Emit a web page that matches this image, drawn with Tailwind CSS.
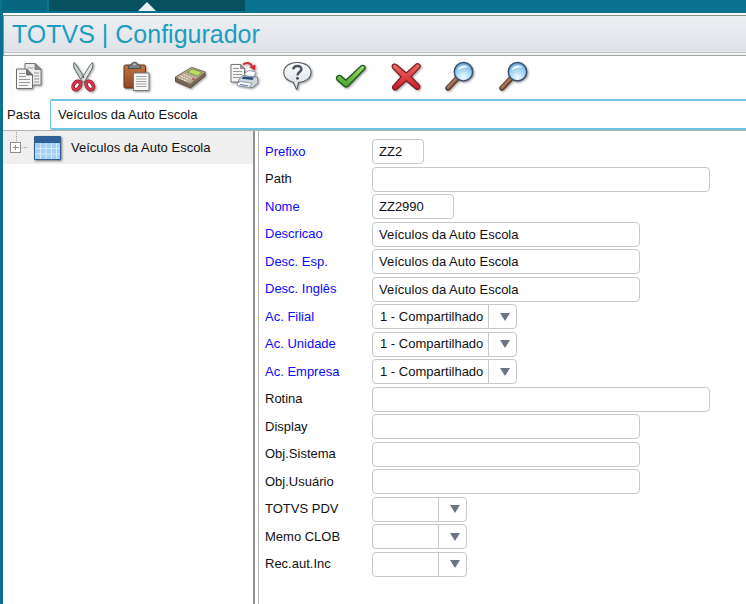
<!DOCTYPE html>
<html lang="pt-BR">
<head>
<meta charset="utf-8">
<meta name="viewport" content="width=device-width, initial-scale=1">
<title>TOTVS | Configurador</title>
<script src="https://cdn.jsdelivr.net/npm/@tailwindcss/browser@4"></script>
</head>
<body class="min-h-screen flex flex-col overflow-x-hidden bg-[#08728f] font-['Liberation_Sans',Arial,sans-serif] text-[13px] leading-4 text-[#111]">

<!-- Top strip with the collapse tab -->
<nav class="h-[13px] shrink-0 flex items-start pl-[2px]">
  <div class="w-[46px] h-[10px] bg-[#07657d] border-r border-[#2a6c7c]"></div>
  <button type="button" aria-label="Recolher menu" class="w-[196px] h-[11px] ml-px bg-[#07505f] flex justify-center items-end">
    <svg class="w-[18px] h-[9px]" viewBox="0 0 18 9"><path d="M9 0 18 9H0z" fill="#e8f0f3"/></svg>
  </button>
</nav>

<div class="grow flex flex-col ml-[3px] bg-white">
  <header class="mt-[2px] border-t border-l border-b border-t-[#8e8e8e] border-l-[#8e8e8e] border-b-[#a2a2a2] bg-[#f4f4f4] pb-[2px]">
    <div class="h-[37px] border-b border-[#bfc3c6] bg-linear-to-b from-[#edf0f3] to-[#dfe3e8] flex items-center pl-2">
      <h1 class="text-[25px] leading-[30px] text-[#1b9dc4]">TOTVS | Configurador</h1>
    </div>
  </header>

  <div class="flex gap-[22px] pl-[10px] pt-[5px] pb-[6px]" role="toolbar" aria-label="Ferramentas">
    <button type="button" aria-label="Copiar" class="size-8">
      <svg class="size-8 drop-shadow-[1px_1px_1px_#0006]" viewBox="0 0 32 32">
        <path d="M12 2.500h10l6 6V24H12z" fill="#ececec" stroke="#777"/><path d="M22 2.500v6h6z" fill="#8c8c8c" stroke="#666" stroke-width=".7"/>
        <path d="M14.500 7h6M21 12h5M21 15h5M21 18h5M21 21h5" stroke="#999"/>
        <path d="M3.500 8h10l6 6v13.500h-16z" fill="#f5f5f3" stroke="#6e6e6e"/><path d="M13.500 8v6h6z" fill="#777" stroke="#555" stroke-width=".7"/>
        <path d="M6 12.500h6M6 15.500h7M6 18.500h11M6 21.500h11M6 24.500h9" stroke="#999"/>
      </svg>
    </button>
    <button type="button" aria-label="Recortar" class="size-8">
      <svg class="size-8 drop-shadow-[1px_1px_1px_#0006]" viewBox="0 0 32 32">
        <path d="M7 1.500c-1 3 0 6 1.500 8l7 12 3-3L10 5z" fill="#c7cdce" stroke="#646b6e"/>
        <path d="M25.500 1.500c1 3 0 6-1.500 8l-7 12-3-3L22.500 5z" fill="#e2e5e5" stroke="#646b6e"/>
        <circle cx="16.300" cy="16" r="1" fill="#555"/>
        <ellipse cx="9.800" cy="24.500" rx="3.200" ry="4.600" transform="rotate(35 9.800 24.500)" fill="#fff" stroke="#8f1c2b" stroke-width="3.600"/>
        <ellipse cx="22.800" cy="24.500" rx="3.200" ry="4.600" transform="rotate(-35 22.800 24.500)" fill="#fff" stroke="#8f1c2b" stroke-width="3.600"/>
        <ellipse cx="9.800" cy="24.500" rx="3.200" ry="4.600" transform="rotate(35 9.800 24.500)" fill="none" stroke="#d8384c" stroke-width="2.200"/>
        <ellipse cx="22.800" cy="24.500" rx="3.200" ry="4.600" transform="rotate(-35 22.800 24.500)" fill="none" stroke="#d8384c" stroke-width="2.200"/>
      </svg>
    </button>
    <button type="button" aria-label="Colar" class="size-8">
      <svg class="size-8 drop-shadow-[1px_1px_1px_#0006]" viewBox="0 0 32 32">
        <defs><linearGradient id="board" x1="0" y1="0" x2="0" y2="1"><stop offset="0" stop-color="#c4713c"/><stop offset="1" stop-color="#8a4824"/></linearGradient></defs>
        <rect x="3" y="4" width="21.500" height="23" rx="1.500" fill="url(#board)" stroke="#67371d"/>
        <path d="M7.500 7.500V5l3-1.500C10.500.5 16.500.5 16.500 3.500l3 1.500v2.500z" fill="#7c8183" stroke="#494d4f"/><circle cx="13.500" cy="3.500" r="1" fill="#ddd"/>
        <path d="M12.500 12h15.500v17.500H12.500z" fill="#f6f6f4" stroke="#777"/>
        <path d="M15 15.500h10.500M15 18h10.500M15 20.500h10.500M15 23h10.500M15 25.500h10.500" stroke="#a2a2a2"/>
      </svg>
    </button>
    <button type="button" aria-label="Calculadora" class="size-8">
      <svg class="size-8 drop-shadow-[1px_1px_1px_#0006]" viewBox="0 0 32 32">
        <path d="M.5 16 16.500 6.500 30 11v4L15.500 27 .5 20.500z" fill="#766655" stroke="#5d5145"/>
        <path d="M.8 16 16.500 6.500 30 11 15.300 22.800z" fill="#b9aa96" stroke="#8d7e6c" stroke-width=".7"/>
        <path d="m17 8 10 3.300-4.800 3.600-9.800-3.600z" fill="#b9df5d" stroke="#6f8e38" stroke-width=".8"/>
        <path d="m8.500 13.500 8.500 3.600M6 15.200l8.500 3.600M3.800 17l8.500 3.400" stroke="#efe6d8" stroke-width="1.200" stroke-dasharray="1.800 1"/>
        <path d="m17.500 17.800 1.800.8" stroke="#c03b25" stroke-width="1.600"/>
      </svg>
    </button>
    <button type="button" aria-label="Imprimir" class="size-8">
      <svg class="size-8 drop-shadow-[1px_1px_1px_#0006]" viewBox="0 0 32 32">
        <path d="M2 3.500h9.500l4 4V21H2z" fill="#f4f4f2" stroke="#777"/><path d="M11.500 3.500v4h4z" fill="#999" stroke="#666" stroke-width=".6"/>
        <path d="M4 7.500h6M4 10.500h9M4 13.500h9M4 16.500h7" stroke="#999"/>
        <path d="M14 3.500c3-2.500 7-2 9 1.300" fill="none" stroke="#d92a2f" stroke-width="2"/><path d="m20 6 6.500-2.500-.5 6z" fill="#d92a2f"/>
        <path d="m16 12 4-2.500 7 1.500-2.500 5.500-9-.5z" fill="#fafcff" stroke="#8592a5" stroke-width=".8"/>
        <path d="m9.500 19 4-4.500 15 1.500.5 6-5.500 4.500-13-2z" fill="#cfd6e0" stroke="#66758b" stroke-width=".8"/>
        <path d="m14.500 15.500 10.500 1-1.500 2.500-11-1.300z" fill="#2b4a7c"/>
        <path d="m8 22 4-1.500 11 1.800-2.500 4.200-12-2z" fill="#fff" stroke="#7b879a" stroke-width=".8"/><path d="m11 23.500 8.500 1.300" stroke="#577cb8"/>
      </svg>
    </button>
    <button type="button" aria-label="Ajuda" class="size-8">
      <svg class="size-8 drop-shadow-[1px_1px_1px_#0006]" viewBox="0 0 32 32">
        <defs><linearGradient id="bubble" x1="0" y1="0" x2="0" y2="1"><stop offset="0" stop-color="#fff"/><stop offset="1" stop-color="#d7dce1"/></linearGradient></defs>
        <path d="M14.200 1.500C6.500 1.500.800 5.500.800 11.500c0 5 4.200 8.500 9.700 9.700 1 2.500 1.500 5 3.500 7.300.800-2.500.6-5 1.600-7 7.200-.4 12.400-4.500 12.400-10C28 5.500 22 1.500 14.200 1.500z" fill="url(#bubble)" stroke="#59616a" stroke-width="1.100"/>
        <path d="M10.300 8.300c.4-4.700 8.600-4.300 8.100.1-.3 2.600-3.900 2.900-3.900 6" fill="none" stroke="#4b5661" stroke-width="2.500"/><circle cx="14.500" cy="17.300" r="1.500" fill="#4b5661"/>
      </svg>
    </button>
    <button type="button" aria-label="Confirmar" class="size-8">
      <svg class="size-8 overflow-visible drop-shadow-[1px_1px_1px_#0006]" viewBox="0 0 32 32">
        <defs><linearGradient id="check" x1="0" y1="0" x2="0" y2="1"><stop offset="0" stop-color="#a2dc70"/><stop offset="1" stop-color="#42a52c"/></linearGradient></defs>
        <path d="M-.5 17c0-2 3-3.500 4.500-2l4.800 4.200L24 5c2-1.600 4.800.2 4 2.600L11.500 24.800c-1.500 1.600-3.500 1.500-4.800 0L.2 18.900c-.5-.5-.7-1.200-.7-1.900z" fill="url(#check)" stroke="#245a1e" stroke-width="1.400"/>
      </svg>
    </button>
    <button type="button" aria-label="Cancelar" class="size-8">
      <svg class="size-8 drop-shadow-[1px_1px_1px_#0006]" viewBox="0 0 32 32">
        <defs><linearGradient id="cross" x1="0" y1="0" x2="0" y2="1"><stop offset="0" stop-color="#ef6a66"/><stop offset="1" stop-color="#c81c26"/></linearGradient></defs>
        <path d="M1.200 5c.3-2 2.700-2.600 4.300-1.300l9.800 8.200 9.700-8.600c1.700-1.400 4.300-.2 4.200 2 0 .6-.3 1.200-.8 1.600l-8.300 8.800 8.200 8.500c1.500 2-.2 4.600-2.800 4.200l-10.300-8.600L5.500 28.500c-2.200 1.400-4.800-.9-3.800-3.200l8.400-9.500-8.300-8.600C1.300 6.500 1 5.700 1.200 5z" fill="url(#cross)" stroke="#7d1820" stroke-width="1.200"/>
      </svg>
    </button>
    <button type="button" aria-label="Pesquisar" class="size-8">
      <svg class="size-8 drop-shadow-[1px_1px_1px_#0006]" viewBox="0 0 32 32">
        <defs><radialGradient id="lens" cx=".5" cy=".8" r=".8"><stop offset="0" stop-color="#f2fbff"/><stop offset=".5" stop-color="#a6d7f5"/><stop offset="1" stop-color="#5fa6dc"/></radialGradient></defs>
        <path d="m12 17.500-9 9.500" stroke="#573a2a" stroke-width="5.400" stroke-linecap="round"/><path d="m11.500 17.500-8.500 9" stroke="#a37455" stroke-width="3" stroke-linecap="round"/>
        <circle cx="18.500" cy="10.700" r="9.200" fill="url(#lens)" stroke="#3d4f70" stroke-width="1.500"/><path d="M12.500 9.500c1-5 7.500-6.500 11-3-4-.5-7 .5-11 3z" fill="#fff" opacity=".85"/>
      </svg>
    </button>
    <button type="button" aria-label="Pesquisar próximo" class="size-8">
      <svg class="size-8 drop-shadow-[1px_1px_1px_#0006]" viewBox="0 0 32 32">
        <path d="m12 17.500-9 9.500" stroke="#573a2a" stroke-width="5.400" stroke-linecap="round"/><path d="m11.500 17.500-8.500 9" stroke="#a37455" stroke-width="3" stroke-linecap="round"/>
        <circle cx="18.500" cy="10.700" r="9.200" fill="url(#lens)" stroke="#3d4f70" stroke-width="1.500"/><path d="M12.500 9.500c1-5 7.500-6.500 11-3-4-.5-7 .5-11 3z" fill="#fff" opacity=".85"/>
      </svg>
    </button>
  </div>

  <div class="flex items-center pl-1">
    <label for="pasta" class="w-[43px] shrink-0">Pasta</label>
    <input id="pasta" type="text" value="Veículos da Auto Escola" class="grow min-w-0 h-[31px] px-[7px] rounded-l-[2px] border-t-2 border-l border-b-2 border-[#6cc6dd] bg-white outline-none">
  </div>

  <div class="grow flex border-t border-[#b4b4b4]">
    <aside class="w-[252px] shrink-0 border-r-2 border-[#929292]">
      <ul>
        <li class="h-[33px] flex items-center bg-[#efefef] pl-[7px]">
          <button type="button" aria-label="Expandir" class="h-[33px] w-[18px] mr-[6px]">
            <svg class="w-[18px] h-[33px]" viewBox="0 0 18 33" fill="none" shape-rendering="crispEdges">
              <path d="M6.500 1v10M12 16.500h6" stroke="#999" stroke-dasharray="1 1"/><rect x=".5" y="11.500" width="10" height="10" fill="#fff" stroke="#8c8c8c"/><path d="M3 16.500h6M5.500 14v5" stroke="#8c8c8c"/>
            </svg>
          </button>
          <svg class="w-[27px] h-6 shrink-0 drop-shadow-[1px_1px_1px_#0008]" viewBox="0 0 27 24">
            <path d="M.5.5h26v23H.5z" fill="#a5d0f1" stroke="#315f91"/><path d="M1 1h25v6H1z" fill="#315f9c"/>
            <path d="M1 12.500h25M1 18h25M6.500 7v16M12 7v16M17.500 7v16M22.500 7v16" stroke="#dceefa" stroke-width=".8"/>
          </svg>
          <span class="ml-[10px]">Veículos da Auto Escola</span>
        </li>
      </ul>
    </aside>

    <form class="grow min-w-0 ml-[3px] border-l border-[#b5b5b5] pl-[6px] pt-[7px] pb-6">
      <div class="h-[27px] flex items-center"><label for="prefixo" class="w-[107px] shrink-0 text-[#0a0aff]">Prefixo</label><input id="prefixo" type="text" value="ZZ2" class="w-[52px] h-[25px] px-[6px] rounded-[4px] border border-[#c5c9c9]"></div>
      <div class="h-7 flex items-center"><label for="path" class="w-[107px] shrink-0">Path</label><input id="path" type="text" class="w-[338px] h-[25px] px-[6px] rounded-[4px] border border-[#c5c9c9]"></div>
      <div class="h-[27px] flex items-center"><label for="nome" class="w-[107px] shrink-0 text-[#0a0aff]">Nome</label><input id="nome" type="text" value="ZZ2990" class="w-[82px] h-[25px] px-[6px] rounded-[4px] border border-[#c5c9c9]"></div>
      <div class="h-7 flex items-center"><label for="descricao" class="w-[107px] shrink-0 text-[#0a0aff]">Descricao</label><input id="descricao" type="text" value="Veículos da Auto Escola" class="w-[268px] h-[25px] px-[6px] rounded-[4px] border border-[#c5c9c9]"></div>
      <div class="h-[27px] flex items-center"><label for="esp" class="w-[107px] shrink-0 text-[#0a0aff]">Desc. Esp.</label><input id="esp" type="text" value="Veículos da Auto Escola" class="w-[268px] h-[25px] px-[6px] rounded-[4px] border border-[#c5c9c9]"></div>
      <div class="h-7 flex items-center"><label for="ingles" class="w-[107px] shrink-0 text-[#0a0aff]">Desc. Inglês</label><input id="ingles" type="text" value="Veículos da Auto Escola" class="w-[268px] h-[25px] px-[6px] rounded-[4px] border border-[#c5c9c9]"></div>
      <div class="h-[27px] flex items-center"><label for="filial" class="w-[107px] shrink-0 text-[#0a0aff]">Ac. Filial</label>
        <span class="relative w-[145px] h-[25px]"><select id="filial" class="appearance-none w-full h-full pl-[7px] pr-7 rounded-[4px] border border-[#c5c9c9] bg-white"><option>1 - Compartilhado</option></select><span class="absolute inset-y-px right-px w-7 border-l border-[#c5c9c9] flex items-center justify-center pl-1 pointer-events-none"><svg class="w-[10px] h-2" viewBox="0 0 10 8"><path d="M0 0h10L5 8z" fill="#6c7482"/></svg></span></span></div>
      <div class="h-7 flex items-center"><label for="unidade" class="w-[107px] shrink-0 text-[#0a0aff]">Ac. Unidade</label>
        <span class="relative w-[145px] h-[25px]"><select id="unidade" class="appearance-none w-full h-full pl-[7px] pr-7 rounded-[4px] border border-[#c5c9c9] bg-white"><option>1 - Compartilhado</option></select><span class="absolute inset-y-px right-px w-7 border-l border-[#c5c9c9] flex items-center justify-center pl-1 pointer-events-none"><svg class="w-[10px] h-2" viewBox="0 0 10 8"><path d="M0 0h10L5 8z" fill="#6c7482"/></svg></span></span></div>
      <div class="h-[27px] flex items-center"><label for="empresa" class="w-[107px] shrink-0 text-[#0a0aff]">Ac. Empresa</label>
        <span class="relative w-[145px] h-[25px]"><select id="empresa" class="appearance-none w-full h-full pl-[7px] pr-7 rounded-[4px] border border-[#c5c9c9] bg-white"><option>1 - Compartilhado</option></select><span class="absolute inset-y-px right-px w-7 border-l border-[#c5c9c9] flex items-center justify-center pl-1 pointer-events-none"><svg class="w-[10px] h-2" viewBox="0 0 10 8"><path d="M0 0h10L5 8z" fill="#6c7482"/></svg></span></span></div>
      <div class="h-7 flex items-center"><label for="rotina" class="w-[107px] shrink-0">Rotina</label><input id="rotina" type="text" class="w-[338px] h-[25px] px-[6px] rounded-[4px] border border-[#c5c9c9]"></div>
      <div class="h-[27px] flex items-center"><label for="display" class="w-[107px] shrink-0">Display</label><input id="display" type="text" class="w-[268px] h-[25px] px-[6px] rounded-[4px] border border-[#c5c9c9]"></div>
      <div class="h-7 flex items-center"><label for="sistema" class="w-[107px] shrink-0">Obj.Sistema</label><input id="sistema" type="text" class="w-[268px] h-[25px] px-[6px] rounded-[4px] border border-[#c5c9c9]"></div>
      <div class="h-[27px] flex items-center"><label for="usuario" class="w-[107px] shrink-0">Obj.Usuário</label><input id="usuario" type="text" class="w-[268px] h-[25px] px-[6px] rounded-[4px] border border-[#c5c9c9]"></div>
      <div class="h-7 flex items-center"><label for="pdv" class="w-[107px] shrink-0">TOTVS PDV</label>
        <span class="relative w-[95px] h-[25px]"><select id="pdv" class="appearance-none w-full h-full pl-[7px] pr-7 rounded-[4px] border border-[#c5c9c9] bg-white"><option></option></select><span class="absolute inset-y-px right-px w-7 border-l border-[#c5c9c9] flex items-center justify-center pl-1 pointer-events-none"><svg class="w-[10px] h-2" viewBox="0 0 10 8"><path d="M0 0h10L5 8z" fill="#6c7482"/></svg></span></span></div>
      <div class="h-[27px] flex items-center"><label for="clob" class="w-[107px] shrink-0">Memo CLOB</label>
        <span class="relative w-[95px] h-[25px]"><select id="clob" class="appearance-none w-full h-full pl-[7px] pr-7 rounded-[4px] border border-[#c5c9c9] bg-white"><option></option></select><span class="absolute inset-y-px right-px w-7 border-l border-[#c5c9c9] flex items-center justify-center pl-1 pointer-events-none"><svg class="w-[10px] h-2" viewBox="0 0 10 8"><path d="M0 0h10L5 8z" fill="#6c7482"/></svg></span></span></div>
      <div class="h-7 flex items-center"><label for="rec" class="w-[107px] shrink-0">Rec.aut.Inc</label>
        <span class="relative w-[95px] h-[25px]"><select id="rec" class="appearance-none w-full h-full pl-[7px] pr-7 rounded-[4px] border border-[#c5c9c9] bg-white"><option></option></select><span class="absolute inset-y-px right-px w-7 border-l border-[#c5c9c9] flex items-center justify-center pl-1 pointer-events-none"><svg class="w-[10px] h-2" viewBox="0 0 10 8"><path d="M0 0h10L5 8z" fill="#6c7482"/></svg></span></span></div>
    </form>
  </div>
</div>
</body>
</html>
